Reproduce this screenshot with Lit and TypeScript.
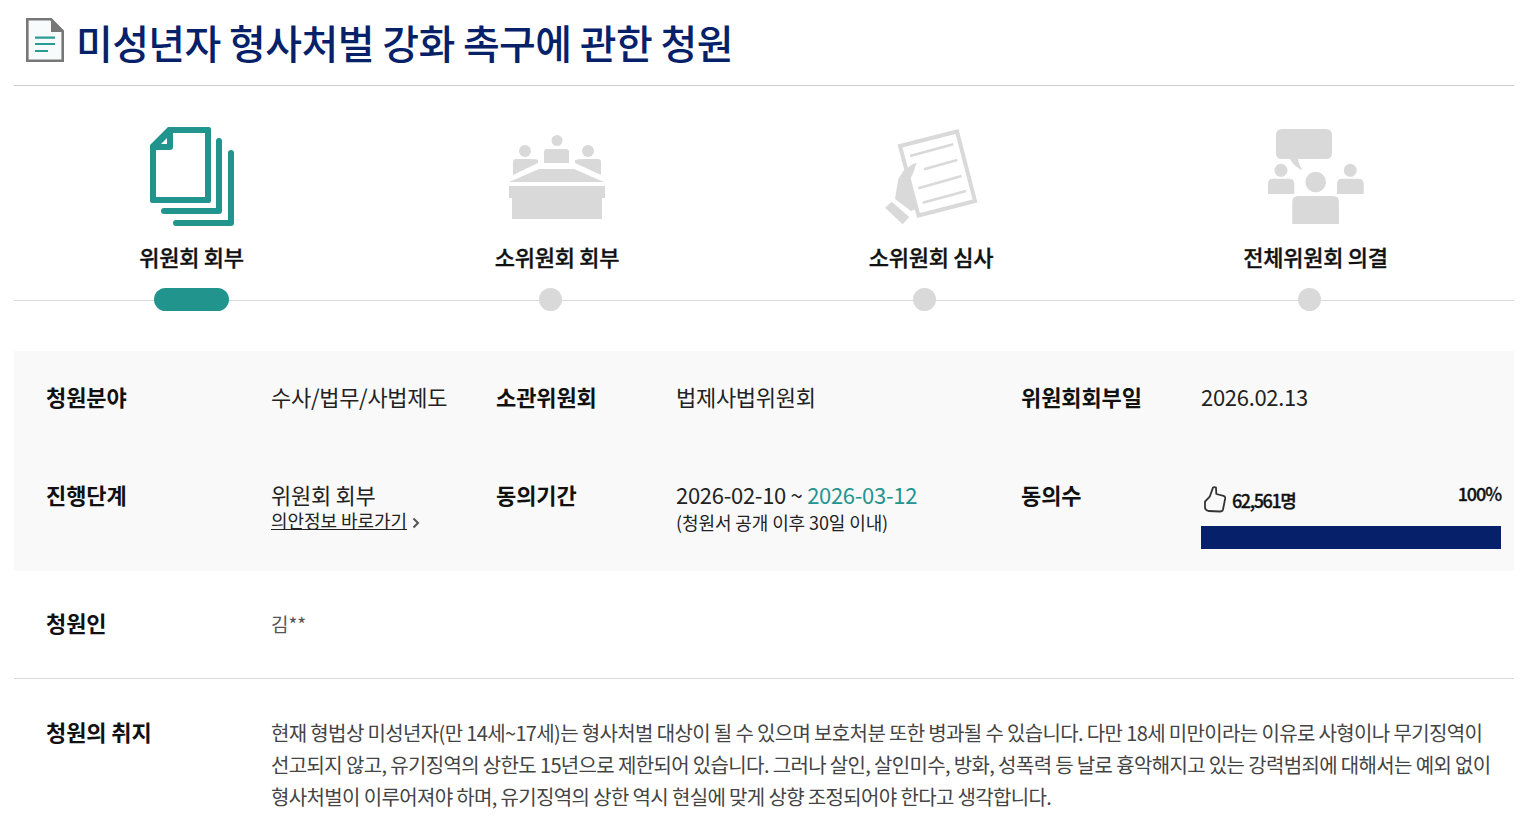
import { LitElement, html, css, svg } from "lit";
import { customElement } from "lit/decorators.js";

const TEAL = "#22948e";
const GREY = "#d9d9d9";

const icons = {
  docs: svg`<svg class="ic" width="84" height="99" viewBox="0 0 84 99">
    <path d="M0 18 L18 0 L59 0 Q61 0 61 2 L61 74 Q61 76 59 76 L2 76 Q0 76 0 74 Z M6 23 L6 70 L55 70 L55 6 L23 6 L23 20 Q23 23 20 23 Z M11 17 L17 17 L17 11 Z" fill="${TEAL}" fill-rule="evenodd"/>
    <path d="M69 14 L69 84 L14 84" fill="none" stroke="${TEAL}" stroke-width="6" stroke-linecap="round" stroke-linejoin="round"/>
    <path d="M81 26 L81 96 L26 96" fill="none" stroke="${TEAL}" stroke-width="6" stroke-linecap="round" stroke-linejoin="round"/>
  </svg>`,
  table: svg`<svg class="ic" width="96" height="84" viewBox="0 0 96 84" fill="${GREY}">
    <circle cx="48" cy="5.5" r="5.5"/><circle cx="16" cy="16" r="6"/><circle cx="79" cy="16" r="6"/>
    <path d="M35 17 Q35 14 38 14 L57 14 Q60 14 60 17 L60 28 L35 28 Z"/>
    <path d="M4 27 Q4 24 7 24 L21 24 Q27 24 29 25 L29 28 L4 40 Z"/>
    <path d="M92 27 Q92 24 89 24 L75 24 Q69 24 66 25 L66 28 L92 40 Z"/>
    <path d="M30 34 L65 34 L95 47 L0 47 Z"/>
    <path d="M0 51 H96 V63 H93 V84 H3 V63 H0 Z"/>
  </svg>`,
  review: svg`<svg class="ic" width="93" height="97" viewBox="0 0 93 97">
    <g fill="none" stroke="${GREY}">
      <path d="M15 18 L72 3.5 L90 73 L33.5 87.5 Z" stroke-width="4"/>
      <path d="M25 28 L68.3 16.3 M39 41.3 L72.3 32 M33.3 60.3 L76.7 48 M37.7 74.7 L81 63" stroke-width="2.6"/>
    </g>
    <path d="M31.7 34.7 L28.3 44.7 L23.3 54.7 L31 81 L26 83 L10 71 L13.3 51 L18.3 43 L28.3 35.7 Z" fill="${GREY}"/>
    <path d="M0 79.7 L6.7 73.7 L24.3 89 L17.7 96.3 Z" fill="${GREY}"/>
  </svg>`,
  talk: svg`<svg class="ic" width="96" height="95" viewBox="0 0 96 95" fill="${GREY}">
    <path d="M14 0 H58 Q64 0 64 6 V24 Q64 30 58 30 H30 Q31 37 34.7 41 Q27 39 22 30 H14 Q8 30 8 24 V6 Q8 0 14 0 Z"/>
    <circle cx="47.7" cy="53" r="10.3"/><circle cx="13" cy="41.3" r="6.5"/><circle cx="82.3" cy="41.3" r="6.5"/>
    <path d="M0 55 Q0 49.7 5.3 49.7 H21 Q26.3 49.7 26.3 55 V65 H0 Z"/>
    <path d="M69 55 Q69 49.7 74.3 49.7 H90.4 Q95.7 49.7 95.7 55 V65 H69 Z"/>
    <path d="M24.3 73 Q24.3 67 30.3 67 H65 Q71 67 71 73 V95 H24.3 Z"/>
  </svg>`,
};

const steps = [
  { label: "위원회 회부", icon: icons.docs, active: true },
  { label: "소위원회 회부", icon: icons.table, active: false },
  { label: "소위원회 심사", icon: icons.review, active: false },
  { label: "전체위원회 의결", icon: icons.talk, active: false },
];

@customElement("app-root")
export class AppRoot extends LitElement {
  static styles = css`
    :host {
      display: block;
      width: 1537px;
      height: 835px;
      overflow: hidden;
      background: #fff;
      box-sizing: border-box;
      padding: 0 23px 0 14px;
      font-family: "Noto Sans CJK KR", "Noto Sans", sans-serif;
      color: #111;
    }
    .head {
      height: 85px;
      border-bottom: 1px solid #ccc;
      display: flex;
      align-items: center;
      padding-left: 12px;
      gap: 12px;
    }
    .head svg { margin-bottom: 5px; }
    h1 {
      margin: 0 0 2px;
      font-size: 40px;
      font-weight: 500;
      color: #062169;
      letter-spacing: -0.62px;
      line-height: 1;
      white-space: nowrap;
    }
    .steps {
      display: grid;
      grid-template-columns: 355px 376px 372px 397px;
      height: 265px;
      position: relative;
    }
    .steps::after {
      content: "";
      position: absolute;
      left: 0;
      right: 0;
      top: 214px;
      height: 1px;
      background: #d9d9d9;
    }
    .step {
      display: flex;
      flex-direction: column;
      align-items: center;
    }
    .art {
      height: 101px;
      margin-top: 40px;
      display: flex;
      align-items: center;
      justify-content: center;
    }
    .label {
      margin-top: 13px;
      font-size: 22px;
      font-weight: 500;
      letter-spacing: -0.25px;
      line-height: 32px;
      color: #111;
      height: 34px;
      -webkit-text-stroke: 0.35px #111;
    }
    .dot {
      width: 23px;
      height: 23px;
      border-radius: 50%;
      background: #d9d9d9;
      margin-top: 14px;
      margin-right: 13px;
      position: relative;
      z-index: 1;
    }
    .step.on .dot {
      width: 75px;
      border-radius: 12px;
      background: #22948e;
      margin-right: 0;
    }
    .info {
      background: #f9f9f9;
      height: 220px;
      display: grid;
      grid-template-columns: 225px 225px 180px 345px 180px 300px;
      grid-template-rows: 98px 122px;
      padding-left: 32px;
      box-sizing: border-box;
    }
    .k {
      font-size: 22px;
      font-weight: 700;
      letter-spacing: -0.1px;
      line-height: 28px;
      color: #111;
    }
    .v {
      font-size: 22px;
      font-weight: 400;
      letter-spacing: -0.3px;
      line-height: 32px;
      color: #222;
    }
    .cell { padding-top: 29px; }
    .cell.k { padding-top: 31px; }
    .sub {
      font-size: 18px;
      letter-spacing: -0.05px;
      line-height: 20px;
      color: #222;
    }
    .sub.lower { margin-top: 2px; letter-spacing: -0.1px; }
    .sub a { color: #222; text-decoration: underline; }
    .chev { vertical-align: -1px; margin-left: 5px; }
    .mid { color: #22948e; }
    .votes {
      display: flex;
      justify-content: space-between;
      margin-top: 1px;
    }
    .count {
      display: flex;
      align-items: center;
      gap: 6px;
      padding-left: 3px;
      font-size: 18px;
      font-weight: 500;
      letter-spacing: -1.4px;
      line-height: 32px;
      height: 32px;
      margin-top: 5px;
      color: #111;
      -webkit-text-stroke: 0.3px #111;
    }
    .pct {
      font-size: 18px;
      font-weight: 500;
      letter-spacing: -1.1px;
      line-height: 24px;
      margin-top: 2px;
      color: #111;
      -webkit-text-stroke: 0.3px #111;
    }
    .bar {
      height: 23px;
      width: 300px;
      background: #062169;
      margin-top: 10px;
    }
    .row {
      display: grid;
      grid-template-columns: 225px 1fr;
      padding-left: 32px;
    }
    .applicant {
      height: 70px;
      border-bottom: 1px solid #d9d9d9;
      padding-top: 37px;
    }
    .applicant .name {
      font-size: 19px;
      color: #555;
      line-height: 32px;
      letter-spacing: -0.1px;
    }
    .purpose { padding-top: 38px; }
    .text {
      font-size: 20px;
      line-height: 32px;
      letter-spacing: -0.64px;
      color: #444;
      width: 1235px;
      word-break: keep-all;
    }
  `;

  render() {
    return html`
      <div class="head">
        <svg width="38" height="44" viewBox="0 0 38 44">
          <path d="M1.3 1.3 H25 L36.7 13 V42.7 H1.3 Z" fill="#f8fbfb" stroke="#777" stroke-width="2.6"/>
          <path d="M25 0 L38 14 H25 Z" fill="#777"/>
          <path d="M9 19.7 H29 M9 26 H29 M9 33 H22" fill="none" stroke="#2a9c96" stroke-width="2.2"/>
        </svg>
        <h1>미성년자 형사처벌 강화 촉구에 관한 청원</h1>
      </div>
      <div class="steps">
        ${steps.map(
          (s) => html`<div class="step ${s.active ? "on" : ""}">
            <div class="art">${s.icon}</div>
            <div class="label">${s.label}</div>
            <div class="dot"></div>
          </div>`
        )}
      </div>
      <div class="info">
        <div class="cell k">청원분야</div>
        <div class="cell v">수사/법무/사법제도</div>
        <div class="cell k">소관위원회</div>
        <div class="cell v">법제사법위원회</div>
        <div class="cell k">위원회회부일</div>
        <div class="cell v">2026.02.13</div>
        <div class="cell k">진행단계</div>
        <div class="cell">
          <div class="v">위원회 회부</div>
          <div class="sub">
            <a>의안정보 바로가기</a><svg class="chev" width="8" height="12" viewBox="0 0 8 12"><path d="M1.5 1.5 L6 6 L1.5 10.5" fill="none" stroke="#555" stroke-width="2"/></svg>
          </div>
        </div>
        <div class="cell k">동의기간</div>
        <div class="cell">
          <div class="v">2026-02-10 ~ <span class="mid">2026-03-12</span></div>
          <div class="sub lower">(청원서 공개 이후 30일 이내)</div>
        </div>
        <div class="cell k">동의수</div>
        <div class="cell">
          <div class="votes">
            <div class="count">
              <svg width="22" height="28" viewBox="0 0 22 28"><path d="M1 15.7 L5.7 10.7 L9 1.6 Q10.5 0.7 12 1.6 L12.3 8 L19.5 9.8 Q21.5 10.5 21.2 12.5 L19 23.5 Q18.5 25.5 16 25.5 L4.5 25 Q1 24 1 21.5 Z" fill="none" stroke="#333" stroke-width="1.8" stroke-linejoin="round"/></svg>
              <span>62,561명</span>
            </div>
            <div class="pct">100%</div>
          </div>
          <div class="bar"></div>
        </div>
      </div>
      <div class="row applicant">
        <div class="k">청원인</div>
        <div class="name">김**</div>
      </div>
      <div class="row purpose">
        <div class="k">청원의 취지</div>
        <div class="text">현재 형법상 미성년자(만 14세~17세)는 형사처벌 대상이 될 수 있으며 보호처분 또한 병과될 수 있습니다. 다만 18세 미만이라는 이유로 사형이나 무기징역이 선고되지 않고, 유기징역의 상한도 15년으로 제한되어 있습니다. 그러나 살인, 살인미수, 방화, 성폭력 등 날로 흉악해지고 있는 강력범죄에 대해서는 예외 없이 형사처벌이 이루어져야 하며, 유기징역의 상한 역시 현실에 맞게 상향 조정되어야 한다고 생각합니다.</div>
      </div>
    `;
  }
}
